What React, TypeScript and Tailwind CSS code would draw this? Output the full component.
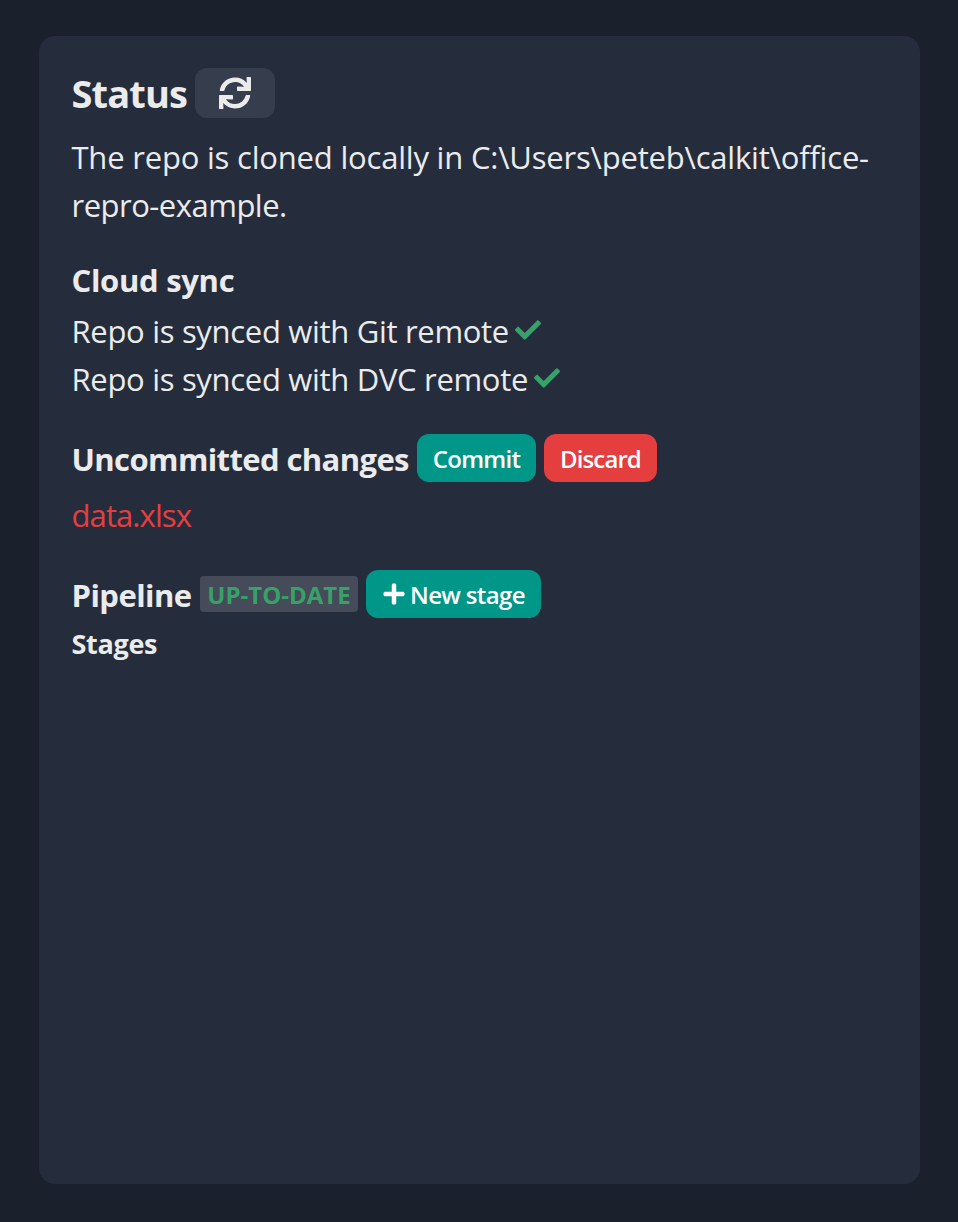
import type { ReactNode } from "react";
import { FaSync, FaCheck, FaPlus } from "react-icons/fa";

function SyncLine({ children }: { children: ReactNode }) {
  return (
    <p className="flex items-center gap-1.5 text-[31px] leading-[48px] tracking-[-0.31px]">
      {children}
      <FaCheck size={26} className="-mt-0.5 text-[#38a169]" />
    </p>
  );
}

export default function App() {
  return (
    <main className="flex h-[1222px] w-[958px] bg-[#1a202c] pt-9 pr-[38px] pb-[38px] pl-[39px] font-['Open_Sans',sans-serif] text-[#ebebec]">
      <section className="flex w-full flex-col whitespace-nowrap rounded-2xl bg-[#252d3d] pr-8 pl-[32.5px] pt-8">
        <header className="flex h-[50px] items-center">
          <h1 className="w-[123.5px] text-[38px] font-bold leading-[50px] tracking-[-0.85px]">Status</h1>
          <button aria-label="Refresh" className="flex h-[50px] w-20 items-center justify-center rounded-xl bg-[#363d4c]">
            <FaSync size={32} />
          </button>
        </header>
        <p className="mt-[15px] text-[31px] leading-[48px] tracking-[-0.2px]">
          The repo is cloned locally in C:\Users\peteb\calkit\office-
          <br />
          <span className="tracking-[-0.5px]">repro-example.</span>
        </p>
        <h2 className="mt-8 text-[31px] font-bold leading-[38px] tracking-[-0.3px]">Cloud sync</h2>
        <div className="mt-2">
          <SyncLine>Repo is synced with Git remote</SyncLine>
          <SyncLine>Repo is synced with DVC remote</SyncLine>
        </div>
        <div className="mt-[31px] flex h-12 items-center">
          <h2 className="mt-0.5 w-[345.5px] text-[31px] font-bold leading-[48px] tracking-[-0.6px]">Uncommitted changes</h2>
          <button className="h-12 w-[119px] rounded-xl bg-[#009688] pt-0.5 text-[24px] font-semibold tracking-[-0.7px] text-white">Commit</button>
          <button className="ml-2 h-12 w-[113px] rounded-xl bg-[#e53e3e] pt-0.5 text-[24px] font-semibold tracking-[-0.9px] text-white">Discard</button>
        </div>
        <p className="mt-[9px] text-[31px] leading-[48px] tracking-[-0.9px] text-[#e53e3e]">data.xlsx</p>
        <div className="mt-[31px] flex h-12 items-center">
          <h2 className="mt-0.5 w-[128.5px] text-[31px] font-bold leading-[48px] tracking-[-0.55px]">Pipeline</h2>
          <span className="flex h-9 w-[158px] items-center justify-center rounded bg-[#454b59] pt-0.5 text-[24px] font-bold text-[#38a169]">UP-TO-DATE</span>
          <button className="ml-2 flex h-12 w-[175px] items-center rounded-xl bg-[#009688] pl-4 text-[24px] font-semibold text-white">
            <FaPlus size={24} className="mr-1 shrink-0" />
            <span className="mt-0.5 tracking-[-0.65px]">New stage</span>
          </button>
        </div>
        <h3 className="mt-[9px] text-[27px] font-bold leading-[34px] tracking-[-0.3px]">Stages</h3>
      </section>
    </main>
  );
}
